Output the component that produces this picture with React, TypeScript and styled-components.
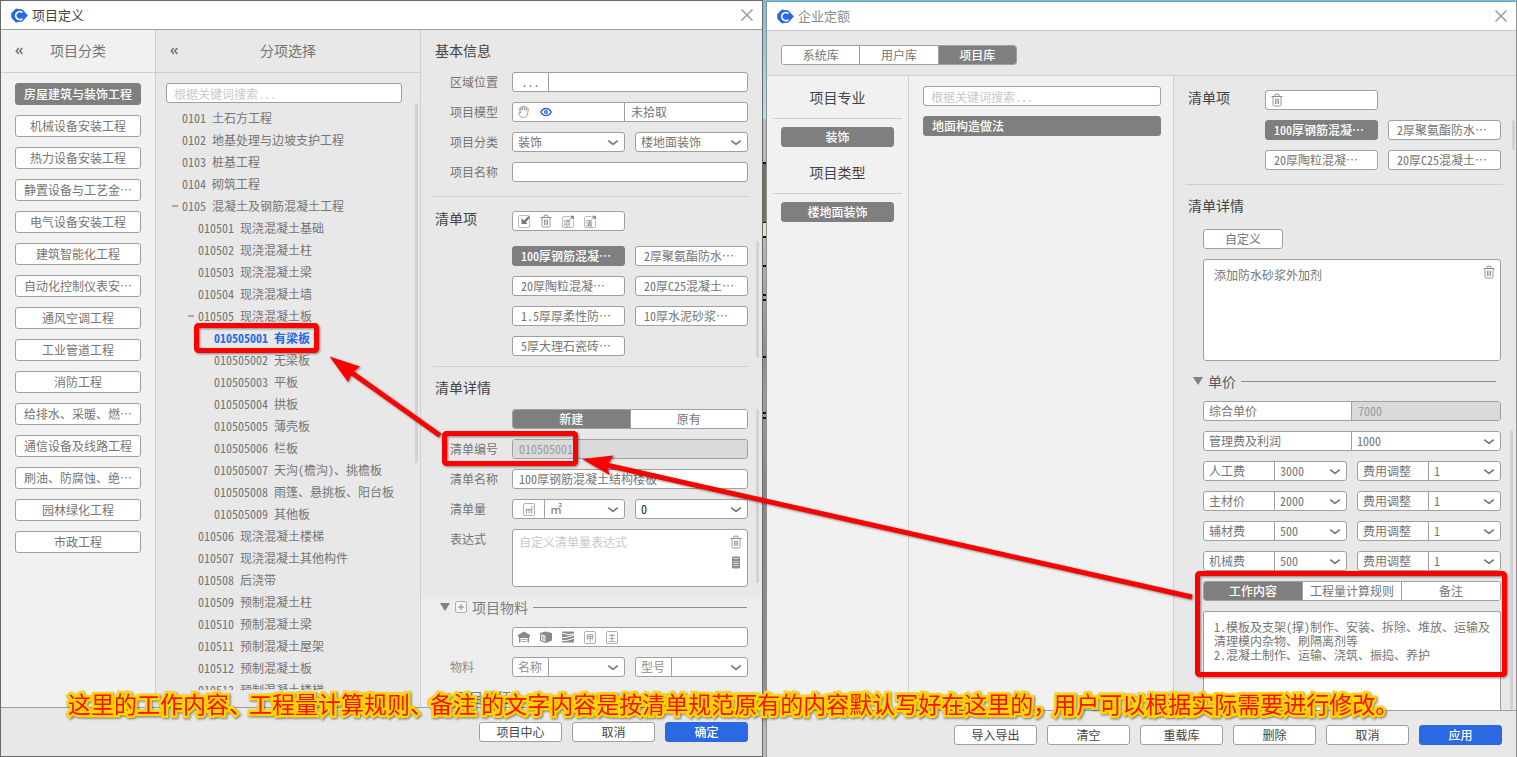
import React from "react";
import styled, { createGlobalStyle, css } from "styled-components";

const color = {
  panel: "#e8e8e8",
  side: "#f1f1f1",
  soft: "#ededed",
  line: "#cfcfcf",
  border: "#a0a0a0",
  active: "#7f7f7f",
  text: "#757575",
  dark: "#444444",
  faint: "#c9c9c9",
  blue: "#2a69e2",
};

const Global = createGlobalStyle`
  * { box-sizing: border-box; }
  body {
    margin: 0;
    font-family: "Noto Sans CJK SC", "Liberation Sans", sans-serif;
    font-size: 12px;
    line-height: 18px;
    font-feature-settings: "hwid";
    color: ${color.text};
  }
  button, input, select, textarea {
    font: inherit;
    font-feature-settings: inherit;
    color: inherit;
    margin: 0;
    outline: none;
  }
`;

/* ---------- page ---------- */

const Page = styled.div`
  position: relative;
  display: grid;
  grid-template-columns: minmax(0, 763fr) 3px minmax(0, 751fr);
  height: 100vh;
  overflow: hidden;
  background: #6fc3e6;
`;

const Strip = styled.div`
  background:
    linear-gradient(#111, #111) 0 162px / 3px 2px no-repeat,
    linear-gradient(#7a725f, #7a725f) 0 164px / 3px 58px no-repeat,
    linear-gradient(#111, #111) 0 222px / 3px 1px no-repeat,
    linear-gradient(#eae2b2, #eae2b2) 0 223px / 3px 13px no-repeat,
    linear-gradient(#111, #111) 0 236px / 3px 2px no-repeat,
    linear-gradient(#111, #111) 0 265px / 3px 2px no-repeat,
    linear-gradient(#111, #111) 0 294px / 3px 2px no-repeat,
    linear-gradient(#111, #111) 0 299px / 3px 2px no-repeat,
    linear-gradient(#111, #111) 0 356px / 3px 2px no-repeat,
    linear-gradient(#111, #111) 0 412px / 3px 2px no-repeat,
    linear-gradient(#111, #111) 0 417px / 3px 2px no-repeat,
    linear-gradient(#6fc3e6, #b3dff0) 0 0 / 3px 119px no-repeat,
    linear-gradient(#b9b9bf 0, #b9b9bf 238px, #a3a6a6 290px, #8b908f 357px, #a8979c 400px, #858a88 480px, #8e8e8e 680px, #b9b9c2 730px);
`;

const Window = styled.section<{ $back?: boolean }>`
  display: flex;
  flex-direction: column;
  min-height: 0;
  background: ${color.panel};
  border: 1px solid ${(p) => (p.$back ? "#8f8f8f" : "#6a6a6a")};
  ${(p) =>
    p.$back &&
    css`
      margin-top: 1px;
      border-bottom: 0;
      border-top-color: #7a9aa8;
    `}
`;

const TitleBar = styled.header<{ $back?: boolean }>`
  flex: none;
  display: flex;
  align-items: center;
  gap: 4px;
  height: 29px;
  padding: 0 9px 0 10px;
  background: #fff;
  border-bottom: 1px solid ${(p) => (p.$back ? "#c8c8c8" : color.border)};
  color: ${(p) => (p.$back ? "#8a8a8a" : color.dark)};
`;

const WindowTitle = styled.h1`
  flex: 1;
  margin: 0;
  font-size: 13px;
  font-weight: 400;
  line-height: 18px;
`;

const IconButton = styled.button`
  display: flex;
  padding: 0;
  border: 0;
  background: none;
  color: #9a9a9a;
  cursor: pointer;
`;

const Columns = styled.div<{ $details: string; $side: string }>`
  flex: 1;
  min-height: 0;
  display: grid;
  grid-template-columns: ${(p) => p.$side} minmax(0, 1fr) ${(p) => p.$details};
  grid-template-rows: minmax(0, 1fr);
`;

const Column = styled.div<{ $bg: string; $last?: boolean }>`
  position: relative;
  display: flex;
  flex-direction: column;
  min-width: 0;
  min-height: 0;
  overflow: hidden;
  background: ${(p) => p.$bg};
  border-right: ${(p) => (p.$last ? "0" : `1px solid ${color.line}`)};
`;

const ColumnHead = styled.div`
  flex: none;
  display: grid;
  grid-template-columns: 14px 1fr 14px;
  align-items: center;
  height: 43px;
  padding: 0 14px;
  border-bottom: 1px solid ${color.line};
  h2 {
    margin: 0;
    padding-bottom: 2px;
    font-size: 14px;
    font-weight: 400;
    text-align: center;
  }
`;

const Footer = styled.footer<{ $bottom: number }>`
  flex: none;
  display: flex;
  justify-content: flex-end;
  gap: 10px;
  padding: 14px 14px ${(p) => p.$bottom}px;
  border-top: 1px solid ${color.border};
  background: ${color.panel};
`;

/* ---------- controls ---------- */

const box = css`
  border: 1px solid ${color.border};
  border-radius: 3px;
  background: #fff;
`;

const Button = styled.button<{ $w?: number; $primary?: boolean; $soft?: boolean }>`
  ${box};
  width: ${(p) => (p.$w ? `${p.$w}px` : "auto")};
  height: 20px;
  padding: 0;
  line-height: 16px;
  color: ${(p) => (p.$soft ? color.text : color.dark)};
  cursor: pointer;
  ${(p) =>
    p.$primary &&
    css`
      background: ${color.blue};
      border-color: ${color.blue};
      color: #fff;
      font-weight: 500;
    `}
`;

const Choice = styled.button<{ $on?: boolean; $tall?: boolean; $start?: boolean }>`
  ${box};
  height: ${(p) => (p.$tall ? 22 : 20)}px;
  padding: 0 8px;
  line-height: 18px;
  text-align: ${(p) => (p.$start ? "left" : "center")};
  white-space: nowrap;
  cursor: pointer;
  ${(p) =>
    p.$on &&
    css`
      background: ${color.active};
      border-color: ${color.active};
      color: #fff;
      font-weight: 500;
    `}
`;

const Search = styled.input`
  ${box};
  flex: none;
  height: 20px;
  padding: 0 7px;
  &::placeholder {
    color: ${color.faint};
  }
`;

const Group = styled.div`
  ${box};
  display: flex;
  flex: 1 1 0;
  min-width: 0;
  height: 20px;
  overflow: hidden;
`;

const Tools = styled(Group)`
  align-items: center;
  gap: 10px;
  padding: 0 5px;
`;

const Prefix = styled.div<{ $w: number; $pad?: number; $center?: boolean }>`
  flex: none;
  display: flex;
  align-items: center;
  justify-content: ${(p) => (p.$center ? "center" : "flex-start")};
  gap: 10px;
  width: ${(p) => p.$w}px;
  padding-left: ${(p) => p.$pad ?? 0}px;
  border-right: 1px solid ${color.border};
  white-space: nowrap;
`;

const Half = styled.label`
  flex: 0 0 50%;
  padding-left: 5px;
  border-right: 1px solid ${color.border};
`;

const Input = styled.input`
  flex: 1;
  width: 100%;
  min-width: 0;
  padding: 0 6px;
  border: 0;
  background: none;
  &:disabled {
    background: #dadada;
    color: #9c9c9c;
  }
`;

const SelectWrap = styled.div`
  position: relative;
  flex: 1;
  display: flex;
  min-width: 0;
  svg {
    position: absolute;
    right: 5px;
    top: 6px;
    pointer-events: none;
  }
`;

const NativeSelect = styled.select<{ $ink?: string }>`
  appearance: none;
  width: 100%;
  padding: 0 20px 0 5px;
  border: 0;
  background: none;
  color: ${(p) => p.$ink ?? "inherit"};
`;

const Segmented = styled.div`
  ${box};
  display: flex;
  height: 20px;
  overflow: hidden;
`;

const Segment = styled.button<{ $on?: boolean }>`
  flex: 1 1 0;
  padding: 0;
  border: 0;
  line-height: 16px;
  background: ${(p) => (p.$on ? color.active : "#fff")};
  color: ${(p) => (p.$on ? "#fff" : color.text)};
  font-weight: ${(p) => (p.$on ? 500 : 400)};
  white-space: nowrap;
  cursor: pointer;
  & + & {
    border-left: 1px solid ${color.border};
  }
`;

const NoteBox = styled.div<{ $h?: number }>`
  position: relative;
  display: flex;
  flex: 1 1 auto;
  height: ${(p) => (p.$h ? `${p.$h}px` : "auto")};
  max-height: ${(p) => (p.$h ? `${p.$h}px` : "none")};
  min-height: ${(p) => (p.$h ? `${p.$h}px` : "0")};
  min-width: 0;
`;

const Note = styled.textarea<{ $open?: boolean; $tight?: boolean }>`
  ${box};
  flex: 1;
  width: 100%;
  padding: ${(p) => (p.$tight ? "5px 24px 5px 6px" : "8px 8px 8px 10px")};
  line-height: 14px;
  resize: none;
  overflow: hidden;
  &::placeholder {
    color: ${color.faint};
  }
  ${(p) =>
    p.$open &&
    css`
      border-bottom: 0;
      border-radius: 3px 3px 0 0;
    `}
`;

const NoteTools = styled.div`
  position: absolute;
  top: 6px;
  right: 6px;
  display: grid;
  gap: 7px;
`;

/* ---------- form layout ---------- */

const Title = styled.h2`
  flex: none;
  margin: 0;
  padding: 0 0 2px 14px;
  font-size: 14px;
  font-weight: 400;
  line-height: 40px;
  color: ${color.dark};
`;

const Form = styled.div<{ $soft?: boolean }>`
  position: relative;
  display: flex;
  flex-direction: column;
  gap: 10px;
  padding: 0 14px 0 29px;
  ${(p) =>
    p.$soft &&
    css`
      flex: 1;
      min-height: 0;
      margin-top: 10px;
      background: ${color.soft};
      color: #8e8e8e;
    `}
`;

const Row = styled.div`
  display: flex;
  gap: 10px;
`;

const Label = styled.label`
  flex: none;
  width: 52px;
  line-height: 20px;
`;

const Rule = styled.hr<{ $gap: number; $below: number }>`
  flex: none;
  width: auto;
  height: 1px;
  margin: ${(p) => p.$gap}px 13px ${(p) => p.$below}px 12px;
  border: 0;
  background: ${color.line};
`;

const ListHead = styled.div<{ $top?: number; $right?: number }>`
  display: flex;
  padding: ${(p) => p.$top ?? 0}px ${(p) => p.$right ?? 14}px 0 14px;
  h2 {
    flex: none;
    width: 77px;
    margin: 0;
    font-size: 14px;
    font-weight: 400;
    line-height: 14px;
    color: ${color.dark};
  }
`;

const HalfWidth = styled.div`
  flex: 1;
  display: grid;
  grid-template-columns: 1fr 1fr;
  gap: 10px;
`;

const Chips = styled.div<{ $top: number; $right?: number }>`
  position: relative;
  display: grid;
  grid-template-columns: 1fr 1fr;
  gap: 10px;
  padding: ${(p) => p.$top}px ${(p) => p.$right ?? 14}px 0 91px;
`;

const Thumb = styled.i<{ $top: number; $h: number; $right?: number }>`
  position: absolute;
  top: ${(p) => p.$top}px;
  right: ${(p) => p.$right ?? 3}px;
  width: 3px;
  height: ${(p) => p.$h}px;
  border-radius: 2px;
  background: #d2d2d2;
`;

const Legend = styled.h3<{ $right: number; $dark?: boolean }>`
  flex: none;
  display: flex;
  align-items: center;
  gap: 5px;
  height: 20px;
  margin: 0 ${(p) => p.$right}px 0 -10px;
  font-size: 14px;
  font-weight: 400;
  color: ${(p) => (p.$dark ? "#5c5c5c" : "#7c7c7c")};
  &::after {
    content: "";
    flex: 1;
    height: 1px;
    background: #8f8f8f;
  }
`;

/* ---------- lists ---------- */

const CategoryList = styled.nav`
  display: grid;
  gap: 10px;
  padding: 10px 14px;
`;

const TreePane = styled.div`
  position: relative;
  flex: 1;
  min-height: 0;
  display: flex;
  flex-direction: column;
  gap: 4px;
  margin-bottom: 17px;
  padding: 10px 18px 0 10px;
`;

const Tree = styled.ul`
  flex: 1;
  min-height: 0;
  margin: 0;
  padding: 0;
  overflow: hidden;
  list-style: none;
`;

const TreeRow = styled.li<{ $level: number; $on?: boolean }>`
  display: flex;
  align-items: center;
  gap: 4px;
  height: 22px;
  padding-left: ${(p) => 6 + p.$level * 16}px;
  white-space: pre;
  color: ${(p) => (p.$on ? color.blue : "inherit")};
  font-weight: ${(p) => (p.$on ? 700 : 400)};
  &::before {
    content: "";
    flex: none;
    width: 6px;
    height: 2px;
  }
  &[aria-expanded]::before {
    background: #a8a8a8;
  }
`;

const TabBar = styled.div`
  flex: none;
  height: 45px;
  padding: 14px 14px 0;
  border-bottom: 1px solid ${color.line};
  ${Segmented} {
    width: 236px;
  }
`;

const SideGroup = styled.div`
  display: grid;
  padding: 0 6px 4px;
  h2 {
    margin: 0 0 8px;
    border-bottom: 1px solid ${color.line};
    font-size: 14px;
    font-weight: 400;
    line-height: 42px;
    text-align: center;
    color: ${color.dark};
  }
  button {
    margin: 0 8px;
  }
`;

const ItemPane = styled.div`
  display: grid;
  gap: 10px;
  padding: 10px 12px 0 14px;
`;

const DetailBody = styled(Form)`
  flex: 1;
  min-height: 0;
  padding: 2px 15px 0 29px;
`;

/* ---------- annotations ---------- */

const Marks = styled.svg`
  position: absolute;
  inset: 0;
  width: 100%;
  height: 100%;
  pointer-events: none;
  filter: drop-shadow(1px 1px 1px rgba(0, 0, 0, 0.45));
`;

const Caption = styled.p`
  position: absolute;
  top: 686px;
  left: 68px;
  display: flex;
  margin: 0;
  font-size: 23px;
  font-weight: 400;
  line-height: 34px;
  font-feature-settings: normal;
  white-space: pre;
  color: #ff0d00;
  -webkit-text-stroke: 5px #ffd500;
  paint-order: stroke fill;
  filter: drop-shadow(1px 1px 1px rgba(0, 0, 0, 0.5));
  pointer-events: none;
  span + span {
    margin-left: -3px;
  }
`;

/* ---------- icons ---------- */

const Logo = () => (
  <svg width="17" height="15" viewBox="0 0 17 15" aria-hidden="true">
    <path
      d="M4.8 1L11.5 2 16.3 7.5 11.5 13 4.8 14 .8 9.8V5.200z"
      fill={color.blue}
      stroke={color.blue}
      strokeLinejoin="round"
    />
    <path d="M11.4 4.600A4 4 0 1 0 11.4 10.600" fill="none" stroke="#fff" strokeWidth="1.700" />
    <circle cx="9.500" cy="7.600" r="2.600" fill={color.blue} />
  </svg>
);

const Cross = () => (
  <svg width="12" height="12" viewBox="0 0 12 12" aria-hidden="true">
    <path d="M.5.5l11 11M11.5.5l-11 11" stroke="currentColor" strokeWidth="1.5" fill="none" />
  </svg>
);

const Collapse = () => (
  <svg width="8" height="8" viewBox="0 0 8 8" aria-hidden="true">
    <path d="M3.8 1L1.3 4l2.5 3M7.3 1L4.8 4l2.5 3" stroke="#777" strokeWidth="1.6" fill="none" />
  </svg>
);

const Chevron = () => (
  <svg width="12" height="8" viewBox="0 0 12 8" aria-hidden="true">
    <path d="M1.2 1.6L6 5.400 10.8 1.600" fill="none" stroke="#777" strokeWidth="1.700" strokeLinejoin="round" />
  </svg>
);

const Hand = () => (
  <svg width="12" height="14" viewBox="0 0 12 14" aria-hidden="true">
    <path
      d="M3 8L1 4.6C.4 3.6 1.6 3 2.2 3.9l1 1.6L2.6 2.600c-.2-1.100 1.100-1.300 1.400-.3l.6 2.500.1-3.300c0-1 1.400-1 1.500 0l.2 3.300.8-2.700c.3-.9 1.600-.6 1.400.4l-.5 3 .9-1.800c.5-.9 1.700-.3 1.400.6-.8 2.400-.3 4.600-1.600 6.700-.9 1.500-4.300 2-5.900.7C1.900 10.900.9 9.400.6 7.900c.8-.5 1.700-.5 2.400.1z"
      fill="none"
      stroke="#959595"
      strokeWidth=".9"
    />
  </svg>
);

const Eye = () => (
  <svg width="12" height="10" viewBox="0 0 12 10" aria-hidden="true">
    <path d="M.8 5C3 .3 9 .3 11.200 5 9 9.700 3 9.700.8 5z" fill="#fff" stroke={color.blue} strokeWidth="1.500" />
    <circle cx="6" cy="5" r="2.100" fill={color.blue} />
    <circle cx="6" cy="5" r=".7" fill="#fff" />
  </svg>
);

const Trash = () => (
  <svg width="12" height="14" viewBox="0 0 12 14" aria-hidden="true" fill="none" stroke="#8c8c8c">
    <path d="M.5 3.500h11M4 3.200V1.800Q4 1.200 4.600 1.200h2.800Q8 1.200 8 1.800v1.400" />
    <path d="M2 4v7.500Q2 13 3.500 13h5Q10 13 10 11.500V4M4.500 5.500v5.500M6 5.500v5.500M7.500 5.500v5.500" strokeWidth=".9" />
  </svg>
);

const Import = () => (
  <svg width="12" height="13" viewBox="0 0 12 13" aria-hidden="true">
    <rect x=".5" y=".5" width="11" height="12" rx="1.500" fill="#fff" stroke="#bcbcbc" />
    <path d="M3.500 3v6h6L7.700 7.200 12 2.500 10.500 1 6 5.500z" fill="#777" />
  </svg>
);

const Export = ({ mark }: { mark: string }) => (
  <svg width="12" height="13" viewBox="0 0 12 13" aria-hidden="true">
    <path d="M7.500 1.500H2Q.5 1.500.5 3v8Q.5 12.500 2 12.500h8Q11.500 12.500 11.500 11V5.500" fill="none" stroke="#bcbcbc" />
    <text x="5" y="10.500" fontSize="7" textAnchor="middle" fill="#777">
      {mark}
    </text>
    <path d="M7.500 4.500l3-2.500M8.500 1.200h3v3z" stroke="#888" fill="#888" />
  </svg>
);

const Boxed = ({ mark }: { mark: string }) => (
  <svg width="12" height="13" viewBox="0 0 12 13" aria-hidden="true">
    <rect x=".5" y=".5" width="11" height="12" rx="1.500" fill="#fff" stroke="#b0b0b0" />
    <text x="6" y="9.500" fontSize="8" textAnchor="middle" fill="#777">
      {mark}
    </text>
  </svg>
);

const PlusBox = () => (
  <svg width="12" height="12" viewBox="0 0 12 12" aria-hidden="true">
    <rect x=".5" y=".5" width="11" height="11" rx="1.500" fill="#f4f4f4" stroke="#b0b0b0" />
    <path d="M6 3v6M3 6h6" stroke="#888" />
  </svg>
);

const Triangle = () => (
  <svg width="10" height="8" viewBox="0 0 10 8" aria-hidden="true">
    <path d="M0 0h10L5 8z" fill="#808080" />
  </svg>
);

const Calculator = () => (
  <svg width="12" height="13" viewBox="0 0 12 13" aria-hidden="true">
    <rect x="2" y=".5" width="8" height="12" rx="1.200" fill="#8c8c8c" />
    <path d="M3.500 2.500h5M3.500 5.500h5M3.500 7.500h5M3.500 9.500h5" stroke="#fff" strokeDasharray="1.200 .7" />
  </svg>
);

const House = () => (
  <svg width="12" height="12" viewBox="0 0 12 12" aria-hidden="true">
    <path d="M6 .5L12 4v2h-1v5.500H9.500V7h-7v4.500H1V6H0V4z" fill="#8a8a8a" />
    <path d="M3.500 8.500h5M3.500 10.500h5" stroke="#a5a5a5" />
  </svg>
);

const Cube = () => (
  <svg width="12" height="12" viewBox="0 0 12 12" aria-hidden="true">
    <path d="M0 2L5.500.5 12 2v7.500L6 12 0 10z" fill="#8a8a8a" />
    <path d="M1 3.200l4.500 1.300v6L1 9.200z" fill="#e6e6e6" />
    <path d="M2.500 5v3.500M4 5.500V9" stroke="#999" strokeWidth=".7" />
  </svg>
);

const Layers = () => (
  <svg width="12" height="12" viewBox="0 0 12 12" aria-hidden="true">
    <path d="M0 .5h12v11H0z" fill="#8a8a8a" />
    <path d="M0 2.200q6 2.500 12 .8M0 6.800q6-.2 12-2.800M0 9.800q6 0 12-2.600" stroke="#fff" fill="none" />
  </svg>
);

/* ---------- parts ---------- */

const Select = ({ label, value, id, ink }: { label: string; value: string; id?: string; ink?: string }) => (
  <SelectWrap>
    <NativeSelect id={id} aria-label={label} defaultValue={value} $ink={ink}>
      <option>{value}</option>
    </NativeSelect>
    <Chevron />
  </SelectWrap>
);

const categories = [
  "房屋建筑与装饰工程",
  "机械设备安装工程",
  "热力设备安装工程",
  "静置设备与工艺金…",
  "电气设备安装工程",
  "建筑智能化工程",
  "自动化控制仪表安…",
  "通风空调工程",
  "工业管道工程",
  "消防工程",
  "给排水、采暖、燃…",
  "通信设备及线路工程",
  "刷油、防腐蚀、绝…",
  "园林绿化工程",
  "市政工程",
];

const tree: [number, string, string, boolean?][] = [
  [0, "0101", "土石方工程"],
  [0, "0102", "地基处理与边坡支护工程"],
  [0, "0103", "桩基工程"],
  [0, "0104", "砌筑工程"],
  [0, "0105", "混凝土及钢筋混凝土工程", true],
  [1, "010501", "现浇混凝土基础"],
  [1, "010502", "现浇混凝土柱"],
  [1, "010503", "现浇混凝土梁"],
  [1, "010504", "现浇混凝土墙"],
  [1, "010505", "现浇混凝土板", true],
  [2, "010505001", "有梁板"],
  [2, "010505002", "无梁板"],
  [2, "010505003", "平板"],
  [2, "010505004", "拱板"],
  [2, "010505005", "薄壳板"],
  [2, "010505006", "栏板"],
  [2, "010505007", "天沟(檐沟)、挑檐板"],
  [2, "010505008", "雨篷、悬挑板、阳台板"],
  [2, "010505009", "其他板"],
  [1, "010506", "现浇混凝土楼梯"],
  [1, "010507", "现浇混凝土其他构件"],
  [1, "010508", "后浇带"],
  [1, "010509", "预制混凝土柱"],
  [1, "010510", "预制混凝土梁"],
  [1, "010511", "预制混凝土屋架"],
  [1, "010512", "预制混凝土板"],
  [1, "010513", "预制混凝土楼梯"],
];

const layers = [
  "100厚钢筋混凝…",
  "2厚聚氨酯防水…",
  "20厚陶粒混凝…",
  "20厚C25混凝土…",
  "1.5厚厚柔性防…",
  "10厚水泥砂浆…",
  "5厚大理石瓷砖…",
];

const fees: [string, string][] = [
  ["人工费", "3000"],
  ["主材价", "2000"],
  ["辅材费", "500"],
  ["机械费", "500"],
];

const LayerChips = ({
  items,
  top,
  right,
  children,
}: {
  items: string[];
  top: number;
  right?: number;
  children?: React.ReactNode;
}) => (
  <Chips $top={top} $right={right}>
    {items.map((name, i) => (
      <Choice key={name} $on={i === 0} $start aria-pressed={i === 0}>
        {name}
      </Choice>
    ))}
    {children}
  </Chips>
);

const ProjectWindow = () => (
  <Window>
    <TitleBar>
      <Logo />
      <WindowTitle>项目定义</WindowTitle>
      <IconButton aria-label="关闭"><Cross /></IconButton>
    </TitleBar>
    <Columns $side="155px" $details="341px">
      <Column $bg={color.side}>
        <ColumnHead>
          <IconButton aria-label="收起"><Collapse /></IconButton>
          <h2>项目分类</h2>
        </ColumnHead>
        <CategoryList>
          {categories.map((name, i) => (
            <Choice key={name} $tall $on={i === 0} aria-pressed={i === 0}>
              {name}
            </Choice>
          ))}
        </CategoryList>
      </Column>
      <Column $bg={color.panel}>
        <ColumnHead>
          <IconButton aria-label="收起"><Collapse /></IconButton>
          <h2>分项选择</h2>
        </ColumnHead>
        <TreePane>
          <Search type="text" aria-label="搜索分项" placeholder="根据关键词搜索..." />
          <Tree role="tree">
            {tree.map(([level, code, name, open]) => (
              <TreeRow
                key={code}
                role="treeitem"
                $level={level}
                $on={code === "010505001"}
                aria-selected={code === "010505001"}
                aria-expanded={open}
              >
                {`${code} ${name}`}
              </TreeRow>
            ))}
          </Tree>
          <Thumb $top={30} $h={360} $right={2} />
        </TreePane>
      </Column>
      <Column $bg={color.panel} $last>
        <Title>基本信息</Title>
        <Form>
          <Row>
            <Label htmlFor="area">区域位置</Label>
            <Group>
              <Prefix $w={36} $center>...</Prefix>
              <Input id="area" type="text" />
            </Group>
          </Row>
          <Row>
            <Label htmlFor="model">项目模型</Label>
            <Group>
              <Prefix $w={112} $pad={5}>
                <IconButton aria-label="拾取"><Hand /></IconButton>
                <IconButton aria-label="显示"><Eye /></IconButton>
              </Prefix>
              <Input id="model" type="text" defaultValue="未拾取" />
            </Group>
          </Row>
          <Row>
            <Label htmlFor="kind">项目分类</Label>
            <Group><Select id="kind" label="项目分类" value="装饰" /></Group>
            <Group><Select label="子分类" value="楼地面装饰" /></Group>
          </Row>
          <Row>
            <Label htmlFor="name">项目名称</Label>
            <Group><Input id="name" type="text" /></Group>
          </Row>
        </Form>
        <Rule $gap={14} $below={14} />
        <ListHead>
          <h2>清单项</h2>
          <HalfWidth>
            <Tools>
              <IconButton aria-label="导入"><Import /></IconButton>
              <IconButton aria-label="删除"><Trash /></IconButton>
              <IconButton aria-label="导出项目"><Export mark="项" /></IconButton>
              <IconButton aria-label="导出清单"><Export mark="清" /></IconButton>
            </Tools>
          </HalfWidth>
        </ListHead>
        <LayerChips items={layers} top={15}>
          <Thumb $top={10} $h={117} />
        </LayerChips>
        <Rule $gap={10} $below={0} />
        <Title>清单详情</Title>
        <Form>
          <Row>
            <Label as="span" />
            <Segmented as={Group}>
              <Segment $on aria-pressed>新建</Segment>
              <Segment aria-pressed={false}>原有</Segment>
            </Segmented>
          </Row>
          <Row>
            <Label htmlFor="code">清单编号</Label>
            <Group><Input id="code" type="text" defaultValue="010505001" disabled /></Group>
          </Row>
          <Row>
            <Label htmlFor="title">清单名称</Label>
            <Group><Input id="title" type="text" defaultValue="100厚钢筋混凝土结构楼板" /></Group>
          </Row>
          <Row>
            <Label htmlFor="unit">清单量</Label>
            <Group>
              <Prefix $w={32} $center><Boxed mark="㎡" /></Prefix>
              <Select id="unit" label="单位" value="㎡" />
            </Group>
            <Group><Select label="数量" value="0" ink="#222" /></Group>
          </Row>
          <Row>
            <Label htmlFor="formula">表达式</Label>
            <NoteBox $h={58}>
              <Note id="formula" $tight placeholder="自定义清单量表达式" />
              <NoteTools>
                <IconButton aria-label="清除"><Trash /></IconButton>
                <IconButton aria-label="计算器"><Calculator /></IconButton>
              </NoteTools>
            </NoteBox>
          </Row>
          <Thumb $top={0} $h={174} />
        </Form>
        <Form $soft>
          <Legend $right={1}><Triangle /><PlusBox />项目物料</Legend>
          <Row>
            <Label as="span" />
            <Tools>
              <IconButton aria-label="房屋"><House /></IconButton>
              <IconButton aria-label="构件"><Cube /></IconButton>
              <IconButton aria-label="面层"><Layers /></IconButton>
              <IconButton aria-label="甲供"><Boxed mark="甲" /></IconButton>
              <IconButton aria-label="主材"><Boxed mark="主" /></IconButton>
            </Tools>
          </Row>
          <Row>
            <Label htmlFor="material">物料</Label>
            <Group>
              <Prefix $w={36} $pad={5}>名称</Prefix>
              <Select id="material" label="名称" value="" />
            </Group>
            <Group>
              <Prefix $w={36} $pad={5}>型号</Prefix>
              <Select label="型号" value="" />
            </Group>
          </Row>
          <Legend $right={1}><Triangle />项目特征</Legend>
        </Form>
      </Column>
    </Columns>
    <Footer $bottom={14}>
      <Button $w={83}>项目中心</Button>
      <Button $w={83}>取消</Button>
      <Button $w={83} $primary>确定</Button>
    </Footer>
  </Window>
);

const QuotaWindow = () => (
  <Window $back>
    <TitleBar $back>
      <Logo />
      <WindowTitle>企业定额</WindowTitle>
      <IconButton aria-label="关闭"><Cross /></IconButton>
    </TitleBar>
    <TabBar>
      <Segmented>
        <Segment aria-pressed={false}>系统库</Segment>
        <Segment aria-pressed={false}>用户库</Segment>
        <Segment $on aria-pressed>项目库</Segment>
      </Segmented>
    </TabBar>
    <Columns $side="142px" $details="342px">
      <Column $bg={color.side}>
        <SideGroup>
          <h2>项目专业</h2>
          <Choice $on aria-pressed>装饰</Choice>
        </SideGroup>
        <SideGroup>
          <h2>项目类型</h2>
          <Choice $on aria-pressed>楼地面装饰</Choice>
        </SideGroup>
      </Column>
      <Column $bg={color.side}>
        <ItemPane>
          <Search type="text" aria-label="搜索做法" placeholder="根据关键词搜索..." />
          <Choice $on $start aria-pressed>地面构造做法</Choice>
        </ItemPane>
      </Column>
      <Column $bg={color.panel} $last>
        <ListHead $top={14} $right={15}>
          <h2>清单项</h2>
          <HalfWidth>
            <Tools><IconButton aria-label="删除"><Trash /></IconButton></Tools>
          </HalfWidth>
        </ListHead>
        <LayerChips items={layers.slice(0, 4)} top={10} right={15}>
          <Thumb $top={10} $h={30} $right={1} />
        </LayerChips>
        <Rule $gap={14} $below={0} />
        <Title>清单详情</Title>
        <DetailBody>
          <Row><Button $w={80} $soft>自定义</Button></Row>
          <NoteBox $h={102}>
            <Note aria-label="清单说明" defaultValue="添加防水砂浆外加剂" />
            <NoteTools><IconButton aria-label="清除"><Trash /></IconButton></NoteTools>
          </NoteBox>
          <Legend $right={5} $dark><Triangle />单价</Legend>
          <Row>
            <Group>
              <Half htmlFor="price">综合单价</Half>
              <Input id="price" type="text" defaultValue="7000" disabled />
            </Group>
          </Row>
          <Row>
            <Group>
              <Half htmlFor="profit">管理费及利润</Half>
              <Select id="profit" label="管理费及利润" value="1000" />
            </Group>
          </Row>
          {fees.map(([name, value]) => (
            <Row key={name}>
              <Group>
                <Half htmlFor={name}>{name}</Half>
                <Select id={name} label={name} value={value} />
              </Group>
              <Group>
                <Half htmlFor={`${name}-adj`}>费用调整</Half>
                <Select id={`${name}-adj`} label="费用调整" value="1" />
              </Group>
            </Row>
          ))}
          <Segmented>
            <Segment $on aria-pressed>工作内容</Segment>
            <Segment aria-pressed={false}>工程量计算规则</Segment>
            <Segment aria-pressed={false}>备注</Segment>
          </Segmented>
          <NoteBox>
            <Note
              $open
              aria-label="工作内容"
              defaultValue={"1.模板及支架(撑)制作、安装、拆除、堆放、运输及清理模内杂物、刷隔离剂等\n2.混凝土制作、运输、浇筑、振捣、养护"}
            />
          </NoteBox>
          <Thumb $top={203} $h={280} />
        </DetailBody>
      </Column>
    </Columns>
    <Footer $bottom={12}>
      <Button $w={83}>导入导出</Button>
      <Button $w={83}>清空</Button>
      <Button $w={83}>重载库</Button>
      <Button $w={83}>删除</Button>
      <Button $w={83}>取消</Button>
      <Button $w={83} $primary>应用</Button>
    </Footer>
  </Window>
);

export default function App() {
  return (
    <Page lang="zh-CN">
      <Global />
      <ProjectWindow />
      <Strip />
      <QuotaWindow />
      <Marks viewBox="0 0 1517 757" preserveAspectRatio="none" aria-hidden="true">
        <g fill="none" stroke="#ff0000" strokeWidth="5">
          <rect x="196.500" y="325.500" width="120" height="25" rx="2" />
          <rect x="444.500" y="433.500" width="131" height="30" rx="2" />
          <rect x="1197.500" y="573.500" width="307" height="101" rx="2" />
          <path d="M440 435.500L350 371.500M1192 597L606 465" />
        </g>
        <g fill="#ff0000">
          <path d="M329.500 356.500L360 366.500 352 373 348 382z" />
          <path d="M582 459L613.500 455.500 607 465.500 609.500 475z" />
        </g>
      </Marks>
      <Caption>
        <span>这里的工作内容、</span>
        <span>工程量计算规则、</span>
        <span>备注 的文字内容是按清单规范原有的内容默认写好在这里的，</span>
        <span>用户可以根据实际需要进行修改。</span>
      </Caption>
    </Page>
  );
}
